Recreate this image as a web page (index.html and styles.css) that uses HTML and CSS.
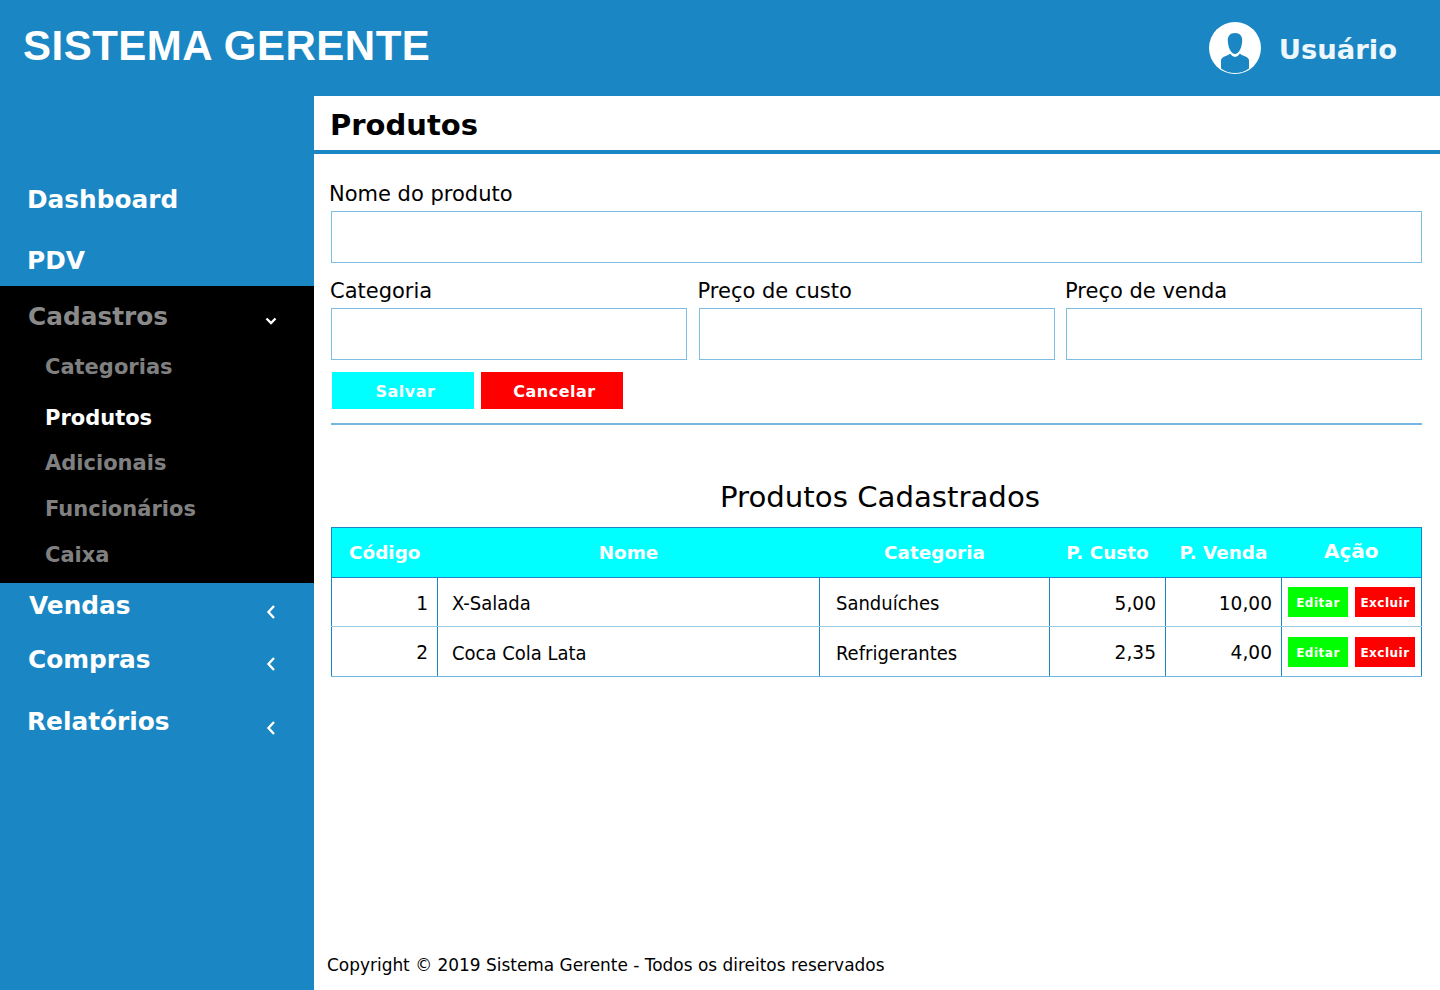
FILE: index.html
```html
<!DOCTYPE html>
<html lang="pt-BR">
<head>
    <meta charset="UTF-8">
    <title>Sistema Gerente</title>
    <link rel="stylesheet" href="styles.css">
</head>
<body>

    <header class="topo">
        <div class="marca">SISTEMA GERENTE</div>
        <div class="usuario">
            <svg class="avatar" viewBox="0 0 52 52" width="52" height="52">
                <circle cx="26" cy="26" r="26" fill="#fff"/>
                <path fill="#1a87c4" d="M26 11c-5 0-7.500 3.500-7.200 8 .2 3.500 1.200 8 3.200 10.500 1.300 1.700 2.800 2.500 4 2.500s2.700-.8 4-2.500c2-2.500 3-7 3.200-10.500.3-4.500-2.200-8-7.200-8z"/>
                <path fill="#1a87c4" d="M12 38c.5-2 2-3 4-3.800 2-.8 4-1.200 5-2.700 1.500 2 3 3.200 5 3.500 2-.3 3.500-1.500 5-3.500 1 1.500 3 1.900 5 2.700 2 .8 3.500 1.800 4 3.800v8.500C36 49.800 31 51 26 51s-10-1.200-14-4.500z"/>
            </svg>
            <span class="usuario-nome">Usuário</span>
        </div>
    </header>

    <div class="corpo">
        <nav class="menu">
            <a class="item i-dash">Dashboard</a>
            <a class="item i-pdv">PDV</a>
            <div class="grupo">
                <a class="item i-cad cinza">Cadastros
                    <svg class="seta seta-baixo" viewBox="0 0 12 12" width="12" height="12"><path d="M1.500 3.500L6 8l4.500-4.500" fill="none" stroke="#fff" stroke-width="2.400"/></svg>
                </a>
                <a class="sub s-cat">Categorias</a>
                <a class="sub s-pro ativo">Produtos</a>
                <a class="sub s-adi">Adicionais</a>
                <a class="sub s-fun">Funcionários</a>
                <a class="sub s-cai">Caixa</a>
            </div>
            <a class="item i-ven">Vendas
                <svg class="seta" viewBox="0 0 12 16" width="12" height="16"><path d="M9 2L3.500 8 9 14" fill="none" stroke="#fff" stroke-width="2.400"/></svg>
            </a>
            <a class="item i-com">Compras
                <svg class="seta" viewBox="0 0 12 16" width="12" height="16"><path d="M9 2L3.500 8 9 14" fill="none" stroke="#fff" stroke-width="2.400"/></svg>
            </a>
            <a class="item i-rel">Relatórios
                <svg class="seta" viewBox="0 0 12 16" width="12" height="16"><path d="M9 2L3.500 8 9 14" fill="none" stroke="#fff" stroke-width="2.400"/></svg>
            </a>
        </nav>

        <main class="conteudo">
            <h1 class="titulo">Produtos</h1>

            <form class="form">
                <label class="rotulo">Nome do produto</label>
                <input class="campo" type="text">
                <div class="linha">
                    <div class="col">
                        <label class="rotulo">Categoria</label>
                        <input class="campo campo-p" type="text">
                    </div>
                    <div class="col">
                        <label class="rotulo">Preço de custo</label>
                        <input class="campo campo-p" type="text">
                    </div>
                    <div class="col">
                        <label class="rotulo">Preço de venda</label>
                        <input class="campo campo-p" type="text">
                    </div>
                </div>
                <div class="botoes">
                    <button class="btn btn-salvar" type="button">Salvar</button>
                    <button class="btn btn-cancelar" type="button">Cancelar</button>
                </div>
            </form>

            <h2 class="subtitulo">Produtos Cadastrados</h2>

            <table class="tabela" cellspacing="0">
                <thead>
                    <tr>
                        <th class="c-cod">Código</th>
                        <th class="c-nome">Nome</th>
                        <th class="c-cat">Categoria</th>
                        <th class="c-custo">P. Custo</th>
                        <th class="c-venda">P. Venda</th>
                        <th class="c-acao">Ação</th>
                    </tr>
                </thead>
                <tbody>
                    <tr>
                        <td class="num">1</td>
                        <td>X-Salada</td>
                        <td class="t-cat">Sanduíches</td>
                        <td class="num">5,00</td>
                        <td class="num">10,00</td>
                        <td class="acoes"><div class="acoes-box"><a class="mini mini-editar">Editar</a><a class="mini mini-excluir">Excluir</a></div></td>
                    </tr>
                    <tr>
                        <td class="num">2</td>
                        <td>Coca Cola Lata</td>
                        <td class="t-cat">Refrigerantes</td>
                        <td class="num">2,35</td>
                        <td class="num">4,00</td>
                        <td class="acoes"><div class="acoes-box"><a class="mini mini-editar">Editar</a><a class="mini mini-excluir">Excluir</a></div></td>
                    </tr>
                </tbody>
            </table>

            <footer class="rodape">Copyright © 2019 Sistema Gerente - Todos os direitos reservados</footer>
        </main>
    </div>

</body>
</html>
```

FILE: styles.css
```css
*{
    box-sizing: border-box;
}
html, body{
    height: 100%;
}
body{
    margin: 0;
    font-family: "DejaVu Sans", sans-serif;
    color: #000;
    background-color: #fff;
    overflow: hidden;
}

/* topo */
.topo{
    height: 96px;
    background-color: #1a87c4;
    color: #fff;
    display: flex;
    align-items: center;
    justify-content: space-between;
    padding: 0 43px 0 23px;
}
.marca{
    font-family: "Liberation Sans", sans-serif;
    font-size: 42px;
    font-weight: bold;
    letter-spacing: 0.5px;
    margin-top: -5px;
}
.usuario{
    display: flex;
    align-items: center;
    gap: 18px;
}
.usuario-nome{
    font-size: 27.400px;
    font-weight: bold;
    color: #eef7fc;
    padding-top: 2px;
}

/* menu */
.corpo{
    display: flex;
    height: 894px;
}
.menu{
    width: 314px;
    flex: none;
    background-color: #1a87c4;
    padding-top: 73px;
}
.item{
    display: flex;
    align-items: center;
    justify-content: space-between;
    color: #fff;
    font-size: 24.800px;
    font-weight: bold;
    padding: 0 37px 0 28px;
}
.seta{
    margin-top: 13px;
}
.seta-baixo{
    margin-top: 10px;
}
.i-dash{ height: 60px; padding-left: 27px; }
.i-pdv{ height: 57px; padding-top: 5px; padding-left: 27px; }
.grupo{
    background-color: #000;
    height: 297px;
}
.i-cad{ height: 60px; }
.cinza{ color: #8a8a8a; }
.sub{
    display: flex;
    align-items: center;
    padding-left: 45px;
    font-size: 21px;
    font-weight: bold;
    color: #808080;
}
.ativo{ color: #fff; }
.s-cat{ height: 42px; }
.s-pro{ height: 50px; padding-top: 10px; }
.s-adi{ height: 46px; padding-top: 4px; }
.s-fun{ height: 46px; padding-top: 3px; }
.s-cai{ height: 46px; padding-top: 4px; }
.i-ven{ height: 44px; padding-left: 29px; }
.i-com{ height: 60px; padding-top: 4px; }
.i-com .seta{ margin-top: 9px; }
.i-rel{ height: 66px; padding-top: 2px; padding-left: 27px; }

/* conteudo */
.conteudo{
    flex: 1;
    display: flex;
    flex-direction: column;
    padding: 0 19px 0 17px;
}
.titulo{
    margin: 0 -19px 0 -17px;
    height: 58px;
    padding: 9px 0 0 16px;
    font-size: 29px;
    line-height: 40px;
    font-weight: bold;
    border-bottom: 4px solid #1a87c4;
}
.form{
    padding-bottom: 14px;
    border-bottom: 2px solid #74b6dd;
}
.rotulo{
    display: block;
    margin-left: -1px;
    font-size: 21px;
    line-height: 28px;
}
.form > .rotulo{
    margin-top: 26px;
    margin-left: -2px;
}
.campo{
    display: block;
    width: 100%;
    height: 52px;
    margin-top: 3px;
    border: 1px solid #7cbde4;
    background-color: #fff;
    outline: none;
}
.linha{
    display: grid;
    grid-template-columns: 356px 356px 356px;
    justify-content: space-between;
    margin-top: 14px;
}
.botoes{
    display: flex;
    gap: 7px;
    margin-top: 12px;
    padding-left: 1px;
}
.btn{
    width: 142px;
    height: 37px;
    padding: 1px 0 0 5px;
    border: none;
    color: #fff;
    font-family: "DejaVu Sans", sans-serif;
    font-size: 16px;
    font-weight: bold;
    letter-spacing: 0.5px;
}
.btn-salvar{ background-color: #00ffff; }
.btn-cancelar{ background-color: #ff0000; }

.subtitulo{
    margin: 53px 0 0;
    padding-left: 7px;
    font-size: 29.200px;
    line-height: 38px;
    font-weight: normal;
    text-align: center;
}

/* tabela */
.tabela{
    width: 1090px;
    margin-top: 11px;
    border-collapse: collapse;
    table-layout: fixed;
}
.tabela th{
    height: 50px;
    background-color: #00ffff;
    color: #fff;
    font-size: 18.400px;
    font-weight: bold;
    border: 1px solid #1a87c4;
    border-left: none;
    border-right: none;
    padding: 0;
}
.tabela th:first-child{ border-left: 1px solid #1a87c4; }
.tabela th:last-child{ border-right: 1px solid #1a87c4; }
.c-cod{ width: 106px; }
.c-nome{ width: 382px; }
.c-cat{ width: 230px; }
.c-custo{ width: 116px; }
.c-venda{ width: 116px; }
.tabela th.c-acao{
    width: 140px;
    font-size: 20px;
    padding-bottom: 3px;
}
.tabela td{
    height: 49px;
    border: 1px solid #1a87c4;
    border-bottom-color: #9ccbe6;
    font-family: "DejaVu Sans Condensed", "DejaVu Sans", sans-serif;
    font-size: 20px;
    padding: 2px 0 0 14px;
}
.tabela tbody tr:last-child td{
    height: 50px;
    border-bottom-color: #6db4de;
}
.tabela td.t-cat{
    padding-left: 16px;
}
.tabela td.num{
    text-align: right;
    padding: 2px 9px 0 0;
    font-family: "DejaVu Sans", sans-serif;
    font-size: 18.600px;
}
.tabela td.acoes{
    padding: 0 0 0 6px;
}
.acoes-box{
    display: flex;
    gap: 7px;
}
.mini{
    flex: none;
    width: 60px;
    height: 30px;
    line-height: 32px;
    text-align: center;
    color: #fff;
    font-family: "DejaVu Sans", sans-serif;
    font-size: 12px;
    font-weight: bold;
    letter-spacing: 0.5px;
}
.mini-editar{ background-color: #00ff00; }
.mini-excluir{ background-color: #ff0000; }

.rodape{
    margin: auto 0 13px -4px;
    font-size: 16.950px;
    line-height: 24px;
    font-family: "DejaVu Sans", sans-serif;
}
```
